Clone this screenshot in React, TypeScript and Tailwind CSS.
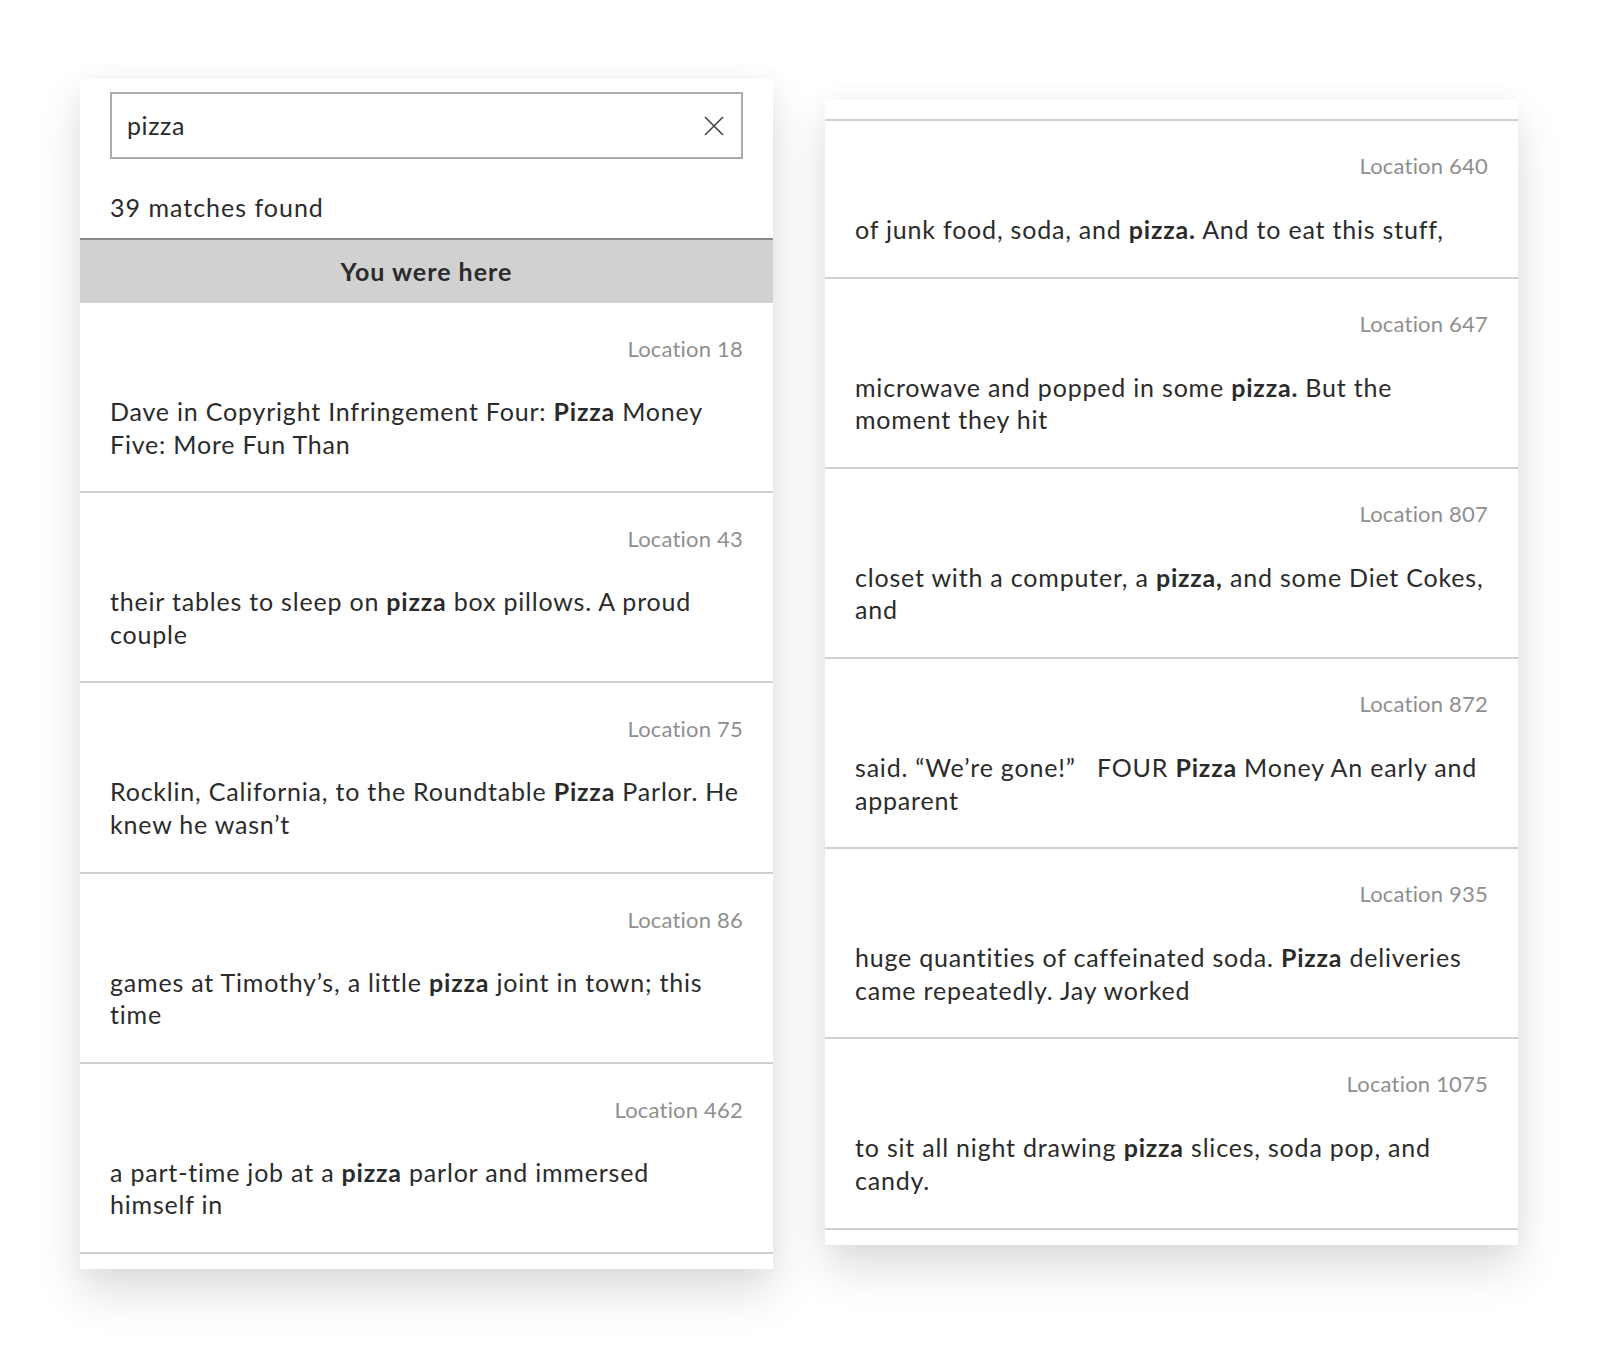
const FONT = "font-['Lato','Noto_Sans',sans-serif]";

type Seg = string | { b: string };
type Match = { loc: number; lines: Seg[][] };

const left: Match[] = [
  { loc: 18, lines: [["Dave in Copyright Infringement Four: ", { b: "Pizza" }, " Money"], ["Five: More Fun Than"]] },
  { loc: 43, lines: [["their tables to sleep on ", { b: "pizza" }, " box pillows. A proud"], ["couple"]] },
  { loc: 75, lines: [["Rocklin, California, to the Roundtable ", { b: "Pizza" }, " Parlor. He"], ["knew he wasn’t"]] },
  { loc: 86, lines: [["games at Timothy’s, a little ", { b: "pizza" }, " joint in town; this"], ["time"]] },
  { loc: 462, lines: [["a part-time job at a ", { b: "pizza" }, " parlor and immersed"], ["himself in"]] },
];

const right: Match[] = [
  { loc: 640, lines: [["of junk food, soda, and ", { b: "pizza." }, " And to eat this stuff,"]] },
  { loc: 647, lines: [["microwave and popped in some ", { b: "pizza." }, " But the"], ["moment they hit"]] },
  { loc: 807, lines: [["closet with a computer, a ", { b: "pizza," }, " and some Diet Cokes,"], ["and"]] },
  { loc: 872, lines: [["said. “We’re gone!”   FOUR ", { b: "Pizza" }, " Money An early and"], ["apparent"]] },
  { loc: 935, lines: [["huge quantities of caffeinated soda. ", { b: "Pizza" }, " deliveries"], ["came repeatedly. Jay worked"]] },
  { loc: 1075, lines: [["to sit all night drawing ", { b: "pizza" }, " slices, soda pop, and"], ["candy."]] },
];

function Row({ m, tight }: { m: Match; tight?: boolean }) {
  return (
    <div className={`border-b-2 border-[#d0d0d0] px-[30px] pb-[31px] ${tight ? "pt-[28px]" : "pt-[29px]"}`}>
      <div className="text-right text-[22px] leading-[33px] tracking-[0.2px] text-[#8f8f8f]">Location {m.loc}</div>
      <div className={`${tight ? "mt-[31px]" : "mt-[30px]"} text-[25px] leading-[32.6px] tracking-[0.8px] text-[#2b2b2b]`}>
        {m.lines.map((line, i) => (
          <div key={i} className="whitespace-pre">
            {line.map((s, j) =>
              typeof s === "string" ? <span key={j}>{s}</span> : <b key={j} className="font-bold">{s.b}</b>
            )}
          </div>
        ))}
      </div>
    </div>
  );
}

const SHADOW = "shadow-[0_24px_42px_rgba(0,0,0,0.13),0_0_24px_rgba(0,0,0,0.04)]";

export default function App() {
  return (
    <div className={`min-h-[1348px] bg-white ${FONT}`}>
      <div className="flex items-start gap-[52px] pl-[80px] pt-[79px]">
        <div className={`w-[693px] bg-white pb-[15px] ${SHADOW}`}>
          <div className="px-[30px] pt-[13px]">
            <div className="flex h-[67px] items-center justify-between border-2 border-[#acacac] pl-[15px] pr-[17px]">
              <span className="text-[25px] tracking-[0.6px] text-[#2b2b2b]">pizza</span>
              <svg width="20" height="20" viewBox="0 0 20 20" className="text-[#444]">
                <path d="M1 1L19 19M19 1L1 19" stroke="currentColor" strokeWidth="1.6" />
              </svg>
            </div>
            <div className="mt-[32px] pb-[14px] text-[25px] leading-[33px] tracking-[1px] text-[#2b2b2b]">39 matches found</div>
          </div>
          <div className="flex h-[65px] items-center justify-center border-t-2 border-[#888] bg-[#d1d1d1] text-[25px] font-bold tracking-[1px] text-[#2b2b2b]">
            You were here
          </div>
          {left.map((m) => (
            <Row key={m.loc} m={m} />
          ))}
        </div>
        <div className={`mt-[21px] w-[693px] bg-white pt-[19px] pb-[15px] ${SHADOW}`}>
          <div className="border-t-2 border-[#d0d0d0]" />
          {right.map((m) => (
            <Row key={m.loc} m={m} tight />
          ))}
        </div>
      </div>
    </div>
  );
}
